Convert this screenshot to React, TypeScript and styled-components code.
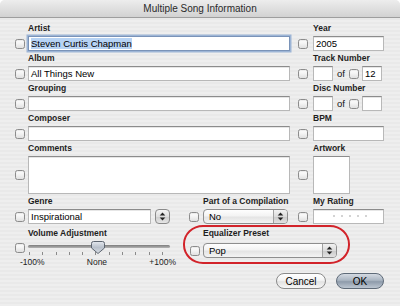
import React from 'react';
import styled, { createGlobalStyle, css } from 'styled-components';

const Global = createGlobalStyle`
  html, body { margin: 0; padding: 0; background: #fff; }
  body { font-family: "Liberation Sans", Arial, sans-serif; }
`;

const Window = styled.div`
  width: 400px;
  height: 306px;
  overflow: hidden;
  display: flex;
  flex-direction: column;
  border-radius: 5px 5px 0 0;
  background: repeating-linear-gradient(to bottom, #eeeeee 0 2px, #e9e9e9 2px 4px);
`;

const TitleBar = styled.div`
  height: 17px;
  flex: none;
  border-bottom: 1px solid #9e9e9e;
  background: linear-gradient(#ededed, #d2d2d2);
  display: flex;
  align-items: center;
  justify-content: center;
  font-size: 10px;
  line-height: 17px;
  color: #2a2a2a;
`;

const Body = styled.div`
  padding: 5px 16px 0 15px;
  display: flex;
  flex-direction: column;
  gap: 2px;
`;

const Row = styled.div<{ $mt?: number }>`
  display: flex;
  align-items: flex-start;
  margin-top: ${(p) => p.$mt ?? 0}px;
`;

const Group = styled.div<{ $w: number; $cb: number }>`
  position: relative;
  flex: none;
  width: ${(p) => p.$w}px;
  display: grid;
  grid-template-columns: ${(p) => p.$cb}px auto;
  grid-template-rows: 11px auto;
  row-gap: 2px;
  align-items: center;
  justify-items: start;
`;

const Ring = styled.div`
  position: absolute;
  left: -7px;
  right: -13px;
  top: -3px;
  bottom: -6px;
  border: 2px solid #d2232a;
  border-radius: 20px / 19px;
  pointer-events: none;
`;

const Label = styled.div`
  grid-column: 2;
  grid-row: 1;
  font-size: 8.5px;
  font-weight: bold;
  line-height: 11px;
  color: #1e1e1e;
  white-space: nowrap;
`;

const Check = styled.div<{ $top?: number }>`
  grid-column: 1;
  grid-row: 2;
  box-sizing: border-box;
  width: 10px;
  height: 10px;
  border: 1px solid #8c8c8c;
  border-radius: 2.5px;
  background: linear-gradient(#ffffff, #f2f2f2 50%, #e0e0e0);
  box-shadow: inset 0 1px 1px rgba(0, 0, 0, 0.08);
  ${(p) =>
    p.$top !== undefined &&
    css`
      align-self: start;
      margin-top: ${p.$top}px;
    `}
`;

const Control = styled.div`
  grid-column: 2;
  grid-row: 2;
  display: flex;
  align-items: center;
`;

const Field = styled.div<{ $w: number; $h?: number; $focus?: boolean }>`
  box-sizing: border-box;
  width: ${(p) => p.$w}px;
  height: ${(p) => p.$h ?? 15}px;
  background: #fff;
  border: 1px solid #b8b8b8;
  border-top-color: #8c8c8c;
  box-shadow: inset 0 1px 0 #e6e6e6;
  padding: 0 2px;
  font-size: 9.5px;
  line-height: 13px;
  color: #000;
  white-space: nowrap;
  overflow: hidden;
  ${(p) =>
    p.$focus &&
    css`
      border-color: #7a93b8;
      box-shadow: 0 0 0 1.5px #9db5d6;
    `}
`;

const Selected = styled.span`
  background: #b7d3f4;
`;

const Of = styled.span`
  font-size: 9.5px;
  color: #111;
  margin: 0 4px 0 4px;
`;

const SmallCheck = styled(Check)`
  margin-right: 3px;
`;

const Artwork = styled.div`
  box-sizing: border-box;
  width: 37px;
  height: 38px;
  background: #fff;
  border: 1px solid #b8b8b8;
  border-top-color: #8c8c8c;
`;

const Popup = styled.div<{ $w: number }>`
  box-sizing: border-box;
  width: ${(p) => p.$w}px;
  height: 15px;
  border: 1px solid #8e8e8e;
  border-radius: 4px;
  background: linear-gradient(#fefefe, #f3f3f3 45%, #e4e4e4 55%, #f4f4f4);
  display: flex;
  align-items: center;
  overflow: hidden;
  font-size: 9.5px;
  color: #000;
`;

const PopupText = styled.span`
  padding-left: 5px;
  flex: 1;
`;

const PopupArrows = styled.div`
  width: 13px;
  height: 100%;
  border-left: 1px solid #a0a0a0;
  background: linear-gradient(#f2f2f2, #dcdcdc 50%, #c9c9c9 51%, #e2e2e2);
  display: flex;
  align-items: center;
  justify-content: center;
`;

const Stepper = styled.div`
  box-sizing: border-box;
  width: 15px;
  height: 15px;
  margin-left: 4px;
  border: 1px solid #8a8a8a;
  border-radius: 4px;
  background: linear-gradient(#f4f4f4, #dedede 50%, #cccccc 51%, #e6e6e6);
  display: flex;
  align-items: center;
  justify-content: center;
`;

const Dots = styled.div`
  display: flex;
  gap: 6px;
  padding: 5px 0 0 17px;
`;

const Dot = styled.span`
  width: 2px;
  height: 2px;
  border-radius: 1px;
  background: #c4c4c4;
`;

const SliderBox = styled.div`
  position: relative;
  width: 142px;
  padding-top: 4px;
`;

const Track = styled.div`
  height: 3px;
  border-radius: 2px;
  background: linear-gradient(#7d7d7d, #b5b5b5);
`;

const Thumb = styled.svg`
  position: absolute;
  left: 63px;
  top: 0;
`;

const Ticks = styled.div`
  display: flex;
  justify-content: space-between;
  padding: 0 7px 0 1px;
  margin-top: 4px;
`;

const Tick = styled.span`
  width: 1px;
  height: 3px;
  background: #8a8a8a;
`;

const Scale = styled.div`
  display: flex;
  justify-content: space-between;
  margin: 2px -6px 0 -8px;
  font-size: 8.5px;
  line-height: 10px;
  color: #222;
`;

const Footer = styled.div`
  display: flex;
  justify-content: flex-end;
  gap: 10px;
  margin-top: 4px;
`;

const Button = styled.div<{ $w: number; $default?: boolean }>`
  box-sizing: border-box;
  width: ${(p) => p.$w}px;
  height: 16px;
  border-radius: 8px;
  border: 1px solid #8a8a8a;
  background: linear-gradient(#ffffff, #f4f4f4 45%, #e2e2e2 55%, #f6f6f6);
  display: flex;
  align-items: center;
  justify-content: center;
  font-size: 10px;
  color: #000;
  ${(p) =>
    p.$default &&
    css`
      border-color: #5e6a78;
      background: linear-gradient(#d4dae2, #aab5c2 45%, #8e9bab 55%, #bcc6d1);
    `}
`;

const Arrows: React.FC = () => (
  <svg width="7" height="9" viewBox="0 0 7 9">
    <path d="M3.5 0.5 L6.3 3.6 H0.7Z M3.5 8.5 L6.3 5.4 H0.7Z" fill="#222" />
  </svg>
);

const App: React.FC = () => {
  const ticks = Array.from({ length: 11 });
  return (
    <>
      <Global />
      <Window>
        <TitleBar>Multiple Song Information</TitleBar>
        <Body>
          <Row>
            <Group $w={283} $cb={13}>
              <Label>Artist</Label>
              <Check />
              <Control>
                <Field $w={262} $focus>
                  <Selected>Steven Curtis Chapman</Selected>
                </Field>
              </Control>
            </Group>
            <Group $w={86} $cb={15}>
              <Label>Year</Label>
              <Check />
              <Control>
                <Field $w={71}>2005</Field>
              </Control>
            </Group>
          </Row>
          <Row>
            <Group $w={283} $cb={13}>
              <Label>Album</Label>
              <Check />
              <Control>
                <Field $w={262}>All Things New</Field>
              </Control>
            </Group>
            <Group $w={86} $cb={15}>
              <Label>Track Number</Label>
              <Check />
              <Control>
                <Field $w={20} />
                <Of>of</Of>
                <SmallCheck />
                <Field $w={20}>12</Field>
              </Control>
            </Group>
          </Row>
          <Row>
            <Group $w={283} $cb={13}>
              <Label>Grouping</Label>
              <Check />
              <Control>
                <Field $w={262} />
              </Control>
            </Group>
            <Group $w={86} $cb={15}>
              <Label>Disc Number</Label>
              <Check />
              <Control>
                <Field $w={20} />
                <Of>of</Of>
                <SmallCheck />
                <Field $w={20} />
              </Control>
            </Group>
          </Row>
          <Row>
            <Group $w={283} $cb={13}>
              <Label>Composer</Label>
              <Check />
              <Control>
                <Field $w={262} />
              </Control>
            </Group>
            <Group $w={86} $cb={15}>
              <Label>BPM</Label>
              <Check />
              <Control>
                <Field $w={71} />
              </Control>
            </Group>
          </Row>
          <Row>
            <Group $w={283} $cb={13}>
              <Label>Comments</Label>
              <Check />
              <Control>
                <Field $w={262} $h={38} />
              </Control>
            </Group>
            <Group $w={86} $cb={15}>
              <Label>Artwork</Label>
              <Check />
              <Control>
                <Artwork />
              </Control>
            </Group>
          </Row>
          <Row>
            <Group $w={174} $cb={13}>
              <Label>Genre</Label>
              <Check />
              <Control>
                <Field $w={123}>Inspirational</Field>
                <Stepper>
                  <Arrows />
                </Stepper>
              </Control>
            </Group>
            <Group $w={109} $cb={14}>
              <Label>Part of a Compilation</Label>
              <Check />
              <Control>
                <Popup $w={85}>
                  <PopupText>No</PopupText>
                  <PopupArrows>
                    <Arrows />
                  </PopupArrows>
                </Popup>
              </Control>
            </Group>
            <Group $w={86} $cb={15}>
              <Label>My Rating</Label>
              <Check />
              <Control>
                <Field $w={71}>
                  <Dots>
                    {Array.from({ length: 5 }).map((_, i) => (
                      <Dot key={i} />
                    ))}
                  </Dots>
                </Field>
              </Control>
            </Group>
          </Row>
          <Row $mt={2}>
            <Group $w={175} $cb={13}>
              <Label>Volume Adjustment</Label>
              <Check $top={2} />
              <Control>
                <SliderBox>
                  <Track />
                  <Thumb width="14" height="13" viewBox="0 0 14 13">
                    <defs>
                      <linearGradient id="tg" x1="0" y1="0" x2="0" y2="1">
                        <stop offset="0" stopColor="#e4e8ee" />
                        <stop offset="0.5" stopColor="#b9c1cc" />
                        <stop offset="1" stopColor="#d9dee4" />
                      </linearGradient>
                    </defs>
                    <path
                      d="M2.5 0.5 H11.5 Q13.5 0.5 13.5 2.5 V7 L7 12.5 L0.5 7 V2.5 Q0.5 0.5 2.5 0.5Z"
                      fill="url(#tg)"
                      stroke="#5d6570"
                      strokeWidth="1"
                    />
                  </Thumb>
                  <Ticks>
                    {ticks.map((_, i) => (
                      <Tick key={i} />
                    ))}
                  </Ticks>
                  <Scale>
                    <span>-100%</span>
                    <span>None</span>
                    <span>+100%</span>
                  </Scale>
                </SliderBox>
              </Control>
            </Group>
            <Group $w={147} $cb={13}>
              <Ring />
              <Label>Equalizer Preset</Label>
              <Check $top={5} />
              <Control>
                <Popup $w={134} style={{ marginTop: 2 }}>
                  <PopupText>Pop</PopupText>
                  <PopupArrows>
                    <Arrows />
                  </PopupArrows>
                </Popup>
              </Control>
            </Group>
          </Row>
          <Footer>
            <Button $w={50}>Cancel</Button>
            <Button $w={48} $default>
              OK
            </Button>
          </Footer>
        </Body>
      </Window>
    </>
  );
};

export default App;
